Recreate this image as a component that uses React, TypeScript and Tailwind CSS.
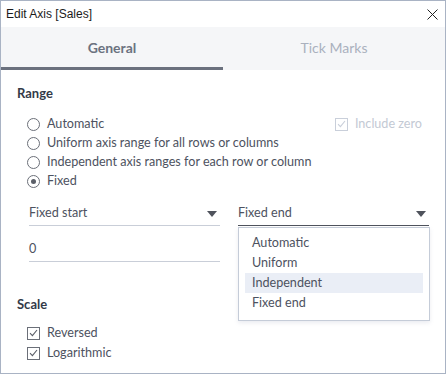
import React from "react";

const font = { fontFamily: "Lato, 'Noto Sans', sans-serif" };

function Radio({ checked, label }: { checked?: boolean; label: string }) {
  return (
    <div className="flex items-center h-[19px]">
      <span className="w-[13px] h-[13px] rounded-full border border-[#6b6f78] flex items-center justify-center bg-white">
        {checked && <span className="w-[5px] h-[5px] rounded-full bg-[#5b5f68]" />}
      </span>
      <span className="ml-[7px] text-[12.6px] text-[#4d5260]">{label}</span>
    </div>
  );
}

function Check({ label, disabled }: { label: string; disabled?: boolean }) {
  const c = disabled ? "#c9cfda" : "#5b5f68";
  return (
    <div className="flex items-center h-[20px]">
      <span
        className={
          disabled
            ? "w-[13px] h-[13px] border border-[#c9cfda] flex items-center justify-center"
            : "w-[13px] h-[13px] border border-[#6b6f78] flex items-center justify-center"
        }
      >
        <svg width="9" height="8" viewBox="0 0 9 8">
          <path d="M1 4.2 L3.4 6.6 L8 1" fill="none" stroke={c} strokeWidth="1.1" />
        </svg>
      </span>
      <span
        className={
          disabled
            ? "ml-[7px] text-[12.6px] text-[#c3c9d4]"
            : "ml-[7px] text-[12.6px] text-[#4d5260]"
        }
      >
        {label}
      </span>
    </div>
  );
}

function Arrow() {
  return (
    <svg width="10" height="6" viewBox="0 0 10 6">
      <path d="M0 0 L10 0 L5 6 Z" fill="#4f535c" />
    </svg>
  );
}

export default function App() {
  return (
    <div className="w-[448px] h-[374px] bg-white" style={font}>
      <div className="w-[446px] h-[374px] border border-[#a9b3c4] bg-white flex flex-col">
        {/* title bar */}
        <div className="h-[26px] flex items-center justify-between pl-[5px] pr-[7px]">
          <span
            className="text-[12px] text-[#1b1b1b]"
            style={{ fontFamily: "'Liberation Sans', Arial, sans-serif" }}
          >
            Edit Axis [Sales]
          </span>
          <svg width="11" height="11" viewBox="0 0 11 11">
            <path d="M0.5 0.5 L10.5 10.5 M10.5 0.5 L0.5 10.5" stroke="#222" strokeWidth="1" />
          </svg>
        </div>

        {/* tabs */}
        <div className="h-[43px] bg-[#f5f6f8] flex">
          <div className="w-[222px] border-b-[3px] border-[#6b717e] flex items-center justify-center pt-[1px] text-[14px] font-bold text-[#6b7280]">
            General
          </div>
          <div className="flex-1 flex items-center justify-center text-[14px] font-normal text-[#aab1be] pb-[2px]">
            Tick Marks
          </div>
        </div>

        {/* content */}
        <div className="px-4 pt-[15px] relative flex-1">
          <div className="text-[13px] font-bold text-[#333a48] h-[16px] leading-[16px]">Range</div>

          <div className="mt-[13px] pl-[10px] relative">
            <div className="flex items-center justify-between">
              <Radio label="Automatic" />
              <div className="mr-[7px]">
                <Check label="Include zero" disabled />
              </div>
            </div>
            <Radio label="Uniform axis range for all rows or columns" />
            <Radio label="Independent axis ranges for each row or column" />
            <Radio checked label="Fixed" />
          </div>

          {/* fixed start / end */}
          <div className="mt-[11px] pl-[12px] flex gap-[18px]">
            <div className="w-[192px]">
              <div className="h-[24px] border-b border-[#c9ced8] flex items-center justify-between pr-[3px]">
                <span className="text-[12.6px] text-[#4d5260]">Fixed start</span>
                <Arrow />
              </div>
              <div className="mt-[12px] h-[24px] border-b border-[#c9ced8] flex items-center">
                <span className="text-[12.6px] text-[#4d5260]">0</span>
              </div>
            </div>
            <div className="w-[192px] relative">
              <div className="h-[24px] border-b border-[#4f535c] flex items-center justify-between pr-[3px]">
                <span className="text-[12.6px] text-[#4d5260]">Fixed end</span>
                <Arrow />
              </div>
              <div className="absolute left-0 top-[25px] w-[192px] h-[94px] bg-white border border-[#c5ccd8] shadow-[0_2px_4px_rgba(120,130,160,0.15)] pt-[5px] px-[6px]">
                {["Automatic", "Uniform", "Independent", "Fixed end"].map((t) => (
                  <div
                    key={t}
                    className={
                      t === "Independent"
                        ? "h-[20px] flex items-center pl-[7px] text-[12.6px] text-[#4d5260] bg-[#eaeef6]"
                        : "h-[20px] flex items-center pl-[7px] text-[12.6px] text-[#4d5260]"
                    }
                  >
                    {t}
                  </div>
                ))}
              </div>
            </div>
          </div>

          <div className="mt-[34px] text-[13px] font-bold text-[#333a48] h-[16px] leading-[16px]">Scale</div>
          <div className="mt-[11px] pl-[10px]">
            <Check label="Reversed" />
            <Check label="Logarithmic" />
          </div>
        </div>
      </div>
    </div>
  );
}
